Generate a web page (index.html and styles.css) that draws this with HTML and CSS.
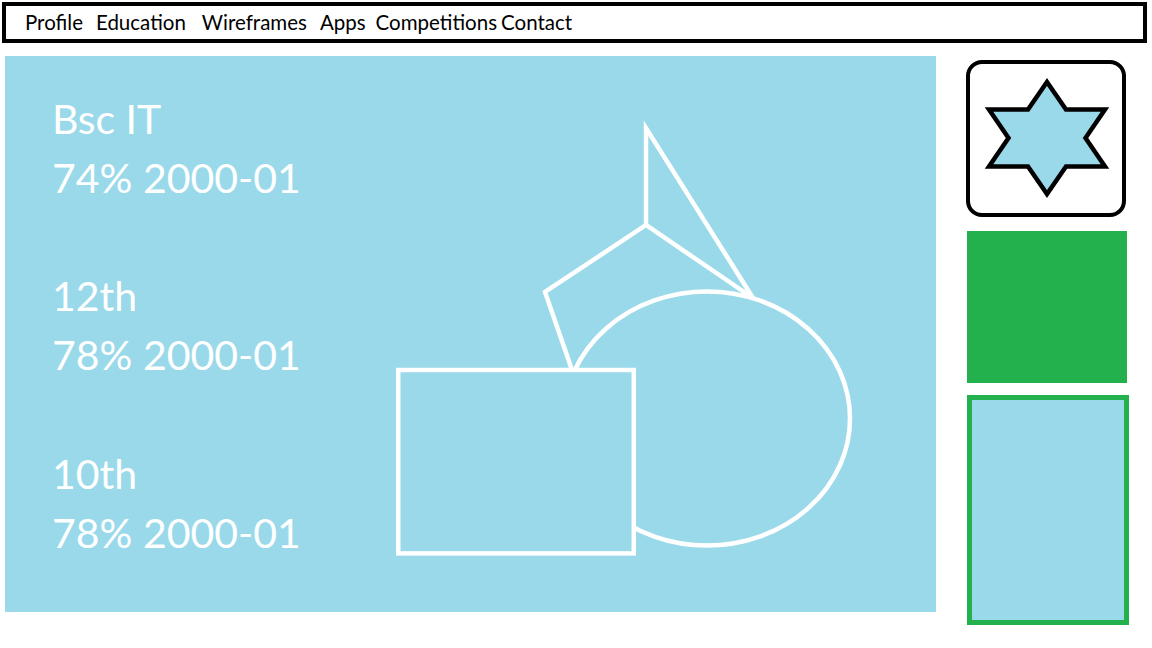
FILE: index.html
```html
<!DOCTYPE html>
<html lang="en">
<head>
    <meta charset="UTF-8">
    <title>Profile</title>
    <link rel="stylesheet" href="styles.css">
</head>
<body>
    <nav class="topnav">
        <a href="#" class="nav-link">Profile</a>
        <a href="#" class="nav-link gap-b">Education</a>
        <a href="#" class="nav-link gap-c">Wireframes</a>
        <a href="#" class="nav-link gap-a">Apps</a>
        <a href="#" class="nav-link gap-d">Competitions</a>
        <a href="#" class="nav-link gap-e">Contact</a>
    </nav>

    <div class="page">
        <section class="edu-panel">
            <div class="edu-list">
                <div class="edu-item">
                    <p>Bsc IT</p>
                    <p>74% 2000-01</p>
                </div>
                <div class="edu-item">
                    <p>12th</p>
                    <p>78% 2000-01</p>
                </div>
                <div class="edu-item">
                    <p>10th</p>
                    <p>78% 2000-01</p>
                </div>
            </div>

            <!-- sketch of shapes -->
            <svg class="shapes" width="480" height="460" viewBox="0 0 480 460">
                <ellipse cx="327" cy="308.5" rx="143" ry="127" fill="none" stroke="#fff" stroke-width="4.5"/>
                <rect x="18.25" y="260" width="235.5" height="183.4" fill="#99d9ea" stroke="#fff" stroke-width="4.5"/>
                <polyline points="192,260 165,182 266,115 370,186" fill="none" stroke="#fff" stroke-width="4.5" stroke-linejoin="miter"/>
                <polyline points="266,115 266,18 373,188" fill="none" stroke="#fff" stroke-width="4.5" stroke-linejoin="miter"/>
            </svg>
        </section>

        <aside class="side">
            <div class="star-card">
                <svg width="152" height="148" viewBox="0 0 152 148">
                    <polygon points="77,18 96,45.5 135,45.5 115.5,74 135,102.5 96,102.5 77,130 58,102.5 19,102.5 38.5,74 19,45.5 58,45.5" fill="#99d9ea" stroke="#000" stroke-width="4.5" stroke-linejoin="miter"/>
                </svg>
            </div>
            <div class="green-block"></div>
            <div class="outline-block"></div>
        </aside>
    </div>
</body>
</html>
```

FILE: styles.css
```css
* { margin: 0; padding: 0; box-sizing: border-box; }
body {
    background: #fff;
    font-family: Lato, 'Open Sans', sans-serif;
    width: 1152px;
    height: 648px;
    overflow: hidden;
}
.topnav {
    display: flex;
    align-items: center;
    margin: 2px 0 0 2px;
    width: 1145px;
    height: 41px;
    border: 4px solid #000;
    padding: 0 0 2px 19px;
}
.nav-link {
    color: #000;
    text-decoration: none;
    font-size: 20.5px;
}
.gap-a { margin-left: 13px; }
.gap-b { margin-left: 13px; }
.gap-c { margin-left: 16px; }
.gap-d { margin-left: 10px; }
.gap-e { margin-left: 4px; }
.page {
    display: flex;
    margin-top: 13px;
}
.edu-panel {
    display: flex;
    width: 931px;
    height: 556px;
    margin-left: 5px;
    background: #99d9ea;
}
.edu-list {
    width: 375px;
    padding: 33px 0 0 47px;
    color: #fff;
    font-size: 41px;
    line-height: 59.1px;
}
.edu-item {
    margin-bottom: 59.1px;
}
.shapes {
    margin-top: 54px;
    flex-shrink: 0;
}
.side {
    display: flex;
    flex-direction: column;
    margin-left: 30px;
    padding-top: 4px;
}
.star-card {
    display: flex;
    width: 160px;
    height: 157px;
    border: 4px solid #000;
    border-radius: 16px;
}
.green-block {
    width: 160px;
    height: 152px;
    margin: 14px 0 0 1px;
    background: #22b14c;
}
.outline-block {
    width: 162px;
    height: 230px;
    margin: 12px 0 0 1px;
    background: #99d9ea;
    border: 5px solid #22b14c;
}
```
